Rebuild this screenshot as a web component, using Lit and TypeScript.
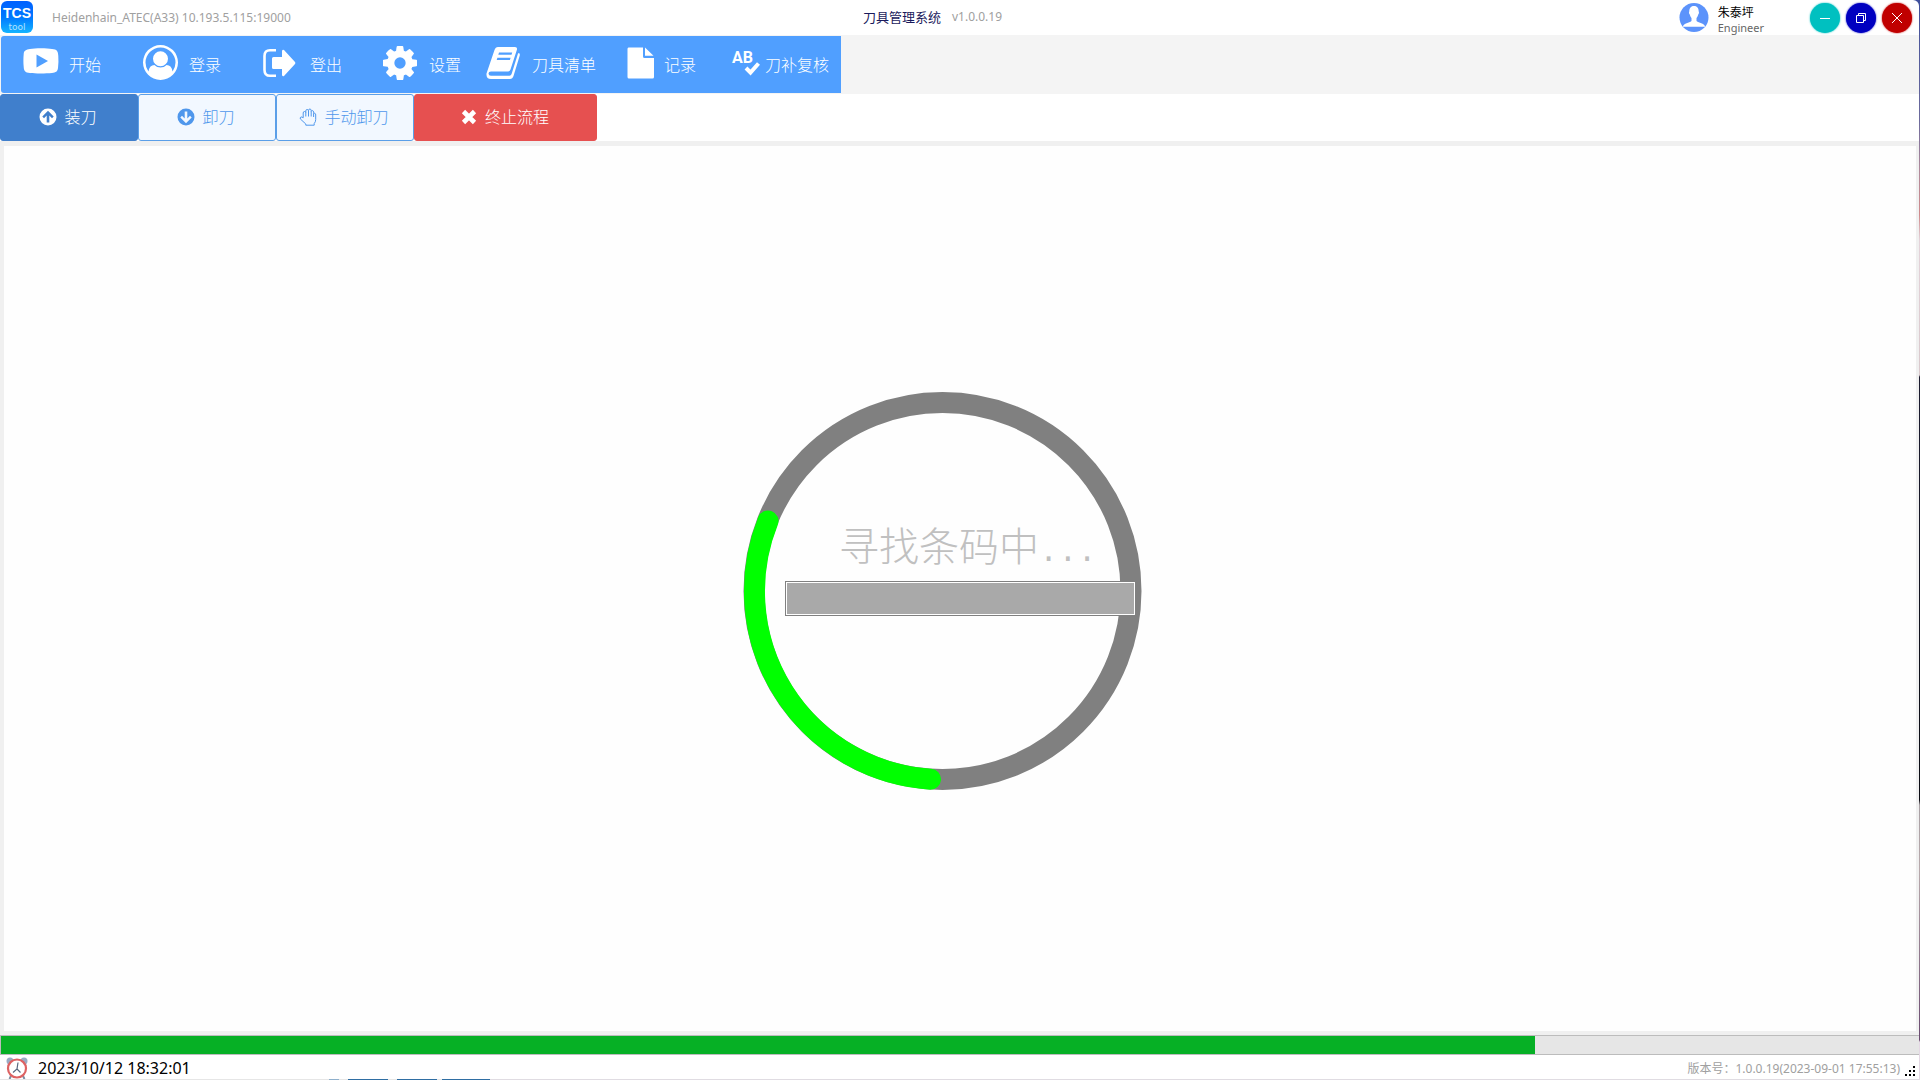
import { LitElement, html, css, svg, nothing } from "lit";
import { customElement, property } from "lit/decorators.js";

const icons: Record<string, { box: string; body: unknown }> = {
  start: {
    box: "0 0 36 26",
    body: svg`<path fill-rule="evenodd" d="M7 1C12 0 24 0 29 1C34 1.500 35 3 35.300 8C35.600 12 35.500 16 35 20C34.500 23.500 33 24.500 29 25C23 25.600 12 25.600 7 25C2 24.500 1 23 .7 19C.3 15 .3 10 .7 6C1 2.500 3 1.500 7 1ZM13.500 6.500V19.500L25 13Z"/>`,
  },
  user: {
    box: "0 0 1792 1792",
    body: svg`<path d="M896 0q182 0 348 71t286 191 191 286 71 348q0 181-70.500 347t-190.500 286-286 191.500-349 71.500-349-71-285.500-191.500-190.500-286-71-347.500 71-348 191-286 286-191 348-71zm619 1351q149-205 149-455 0-156-61-298t-164-245-245-164-298-61-298 61-245 164-164 245-61 298q0 250 149 455 66-327 306-327 131 128 313 128t313-128q240 0 306 327zm-235-647q0-159-112.500-271.500t-271.500-112.500-271.500 112.500-112.500 271.500 112.500 271.500 271.500 112.500 271.500-112.500 112.500-271.500z"/>`,
  },
  exit: {
    box: "0 0 34 28",
    body: svg`<path d="M13 1.200H7Q1.500 1.200 1.500 7V21Q1.500 26.800 7 26.800H13" fill="none" stroke="currentColor" stroke-width="2.600"/><path d="M9 9.500Q9 8 10.500 8H19V2Q19.500 0 21 1L32 13Q32.800 14 32 15L21 27Q19.500 28 19 26V20H10.500Q9 20 9 18.500Z"/>`,
  },
  gear: {
    box: "0 0 1536 1536",
    body: svg`<path d="M1024 768q0-106-75-181t-181-75-181 75-75 181 75 181 181 75 181-75 75-181zm512-109v222q0 12-8 23t-20 13l-185 28q-19 54-39 91 35 50 107 138 10 12 10 25t-9 23q-27 37-99 108t-94 71q-12 0-26-9l-138-108q-44 23-91 38-16 136-29 186-7 28-36 28H657q-14 0-24.500-8.500T621 1506l-28-184q-49-16-90-37l-141 107q-10 9-25 9-14 0-25-11-126-114-165-168-7-10-7-23 0-12 8-23 15-21 51-66.500t54-70.500q-27-50-41-99L29 913q-13-2-21-12.500T0 877V655q0-12 8-23t19-13l186-28q14-46 39-92-40-57-107-138-10-12-10-24 0-10 9-23 26-36 98.500-107.500T337 135q13 0 26 10l138 107q44-23 91-38 16-136 29-186 7-28 36-28h222q14 0 24.500 8.500T915 30l28 184q49 16 90 37l142-107q9-9 24-9 13 0 25 10 129 119 165 170 7 8 7 22 0 12-8 23-15 21-51 66.500t-54 70.500q26 50 41 98l183 28q13 2 21 12.500t8 23.500z"/>`,
  },
  book: {
    box: "0 0 34 34",
    body: svg`<path fill-rule="evenodd" d="M12 1H29Q31.500 1 31 3.500L24.500 23.500Q23.800 25.500 22 25.500H5Q2.500 25.500 2.500 27.500Q2.500 29.800 5 29.800H23.500Q25 29.800 25.600 28L32 7.500L33 7Q34.300 8 33.600 10L27.500 30Q26.500 33 24 33H5Q0 33 .5 27.500L8.500 4Q9.500 1 12 1ZM13 6.500L12.300 8.800H25.500L26.200 6.500ZM11.400 11.700L10.700 14H23.900L24.600 11.700Z"/>`,
  },
  file: {
    box: "0 0 28 32",
    body: svg`<path d="M1.500 .5H16V9.500Q16 11 17.500 11H27V30Q27 31.500 25.500 31.500H2Q.5 31.500 .5 30V2Q.5 .5 1.500 .5ZM18 .5L26.500 8.800H18Z"/>`,
  },
  check: {
    box: "-2 -5 32 36",
    body: svg`<text x="0" y="13" font-family="Roboto, sans-serif" font-size="16" font-weight="700">AB</text><path d="M14 18L18.500 22.500L26.500 13.500" fill="none" stroke="currentColor" stroke-width="4"/>`,
  },
  up: {
    box: "0 0 18 18",
    body: svg`<path fill-rule="evenodd" d="M9 .5A8.500 8.500 0 1 0 9 17.500A8.500 8.500 0 1 0 9 .5ZM9 2.800L14.700 8.500L13 10.200L10.300 7.500V14.500H7.700V7.500L5 10.200L3.300 8.500Z"/>`,
  },
  down: {
    box: "0 0 18 18",
    body: svg`<path fill-rule="evenodd" d="M9 .5A8.500 8.500 0 1 0 9 17.500A8.500 8.500 0 1 0 9 .5ZM9 15.200L14.700 9.500L13 7.800L10.300 10.500V3.500H7.700V10.500L5 7.800L3.300 9.500Z"/>`,
  },
  hand: {
    box: "0 0 18 18",
    body: svg`<path d="M4.200 9.800V5Q4.200 3.500 5.500 3.500T6.800 4.700V2.700Q6.800 1.600 8.100 1.600T9.500 2.400Q9.700 1 10.900 1T12.200 2.600V3.500Q12.400 2.400 13.500 2.600T14.600 4.200V5.600Q15.200 4.900 16 5.300T16.700 7V11.500Q16.700 14 15.200 15.500V17.200H6.800V16L1.400 11Q.8 9.700 1.800 9.100T4.200 9.800ZM6.800 4.700V8.500M9.500 2.400V8.500M12.200 3.500V8.500M14.600 5.600V9" fill="none" stroke="currentColor" stroke-linejoin="round"/>`,
  },
  cross: {
    box: "0 0 18 18",
    body: svg`<path d="M3.500 3.500L14.500 14.500M14.500 3.500L3.500 14.500" fill="none" stroke="currentColor" stroke-width="4.600"/>`,
  },
};

@customElement("tool-icon")
export class ToolIcon extends LitElement {
  @property() name = "";
  @property({ type: Number }) width = 18;
  @property({ type: Number }) height = 18;
  static styles = css`
    :host { display: block; flex: none; }
    svg { display: block; fill: currentColor; overflow: visible; }
  `;
  render() {
    const icon = icons[this.name];
    return icon
      ? html`<svg width=${this.width} height=${this.height} viewBox=${icon.box} aria-hidden="true">${icon.body}</svg>`
      : nothing;
  }
}

const menu = [
  { icon: "start", label: "开始", w: 36, h: 26, cls: "m-start" },
  { icon: "user", label: "登录", w: 35, h: 35, cls: "m-user" },
  { icon: "exit", label: "登出", w: 34, h: 28, cls: "m-exit" },
  { icon: "gear", label: "设置", w: 34, h: 34, cls: "m-gear" },
  { icon: "book", label: "刀具清单", w: 34, h: 34, cls: "m-book" },
  { icon: "file", label: "记录", w: 28, h: 32, cls: "m-file" },
  { icon: "check", label: "刀补复核", w: 32, h: 36, cls: "m-check" },
];

const actions = [
  { icon: "up", label: "装刀", cls: "active" },
  { icon: "down", label: "卸刀", cls: "" },
  { icon: "hand", label: "手动卸刀", cls: "" },
  { icon: "cross", label: "终止流程", cls: "stop" },
];

@customElement("app-root")
export class AppRoot extends LitElement {
  @property({ type: Number }) progress = 80;

  static styles = css`
    :host {
      display: block;
      height: 100vh;
      font-family: "Noto Sans", "Noto Sans CJK SC", sans-serif;
      background:
        linear-gradient(90deg, #e6e6e6 329px, #8fb0cc 329px 339px, #e6e6e6 339px 348px, #2f6ea3 348px 388px, #e6e6e6 388px 397px, #2f6ea3 397px 437px, #e6e6e6 437px 442px, #2f6ea3 442px 490px, #e0dce2 490px) bottom / 100% 1px no-repeat,
        linear-gradient(#3f4f9c 0, #6c6a9c 120px, #b08a9c 170px, #d08a8c 215px, #e4d3da 240px, #d9c8cc 375px, #1c1c30 377px, #0b0d14 800px, #a8a0a4 805px, #b8a9ac 870px, #6a4a70 1040px, #e4d8e4 1042px);
    }
    * { box-sizing: border-box; }
    button { font: inherit; margin: 0; padding: 0; border: 0; cursor: pointer; }
    .window {
      display: flex;
      flex-direction: column;
      height: calc(100% - 1px);
      margin-right: 1px;
      background: #fff;
      border-top-right-radius: 6px;
      overflow: hidden;
    }
    .titlebar { display: grid; grid-template-columns: 1fr auto 1fr; align-items: center; height: 35px; flex: none; font-size: 12px; }
    .left, .right, .title { display: flex; align-items: center; }
    .left { gap: 19px; color: #a0a0a0; }
    .logo { display: block; }
    .title { gap: 11px; color: #1a1a5c; font-size: 13px; margin-right: 54px; padding-bottom: 2px; }
    .version { color: #a0a0a0; font-size: 12px; }
    .right { justify-content: flex-end; padding-right: 7px; }
    .avatar { display: block; }
    .who { display: flex; flex-direction: column; margin-left: 9px; margin-right: 46px; line-height: 15px; color: #000; padding-top: 4px; }
    .role { font-size: 11px; color: #666; }
    .controls { display: flex; gap: 6px; }
    .ctl { width: 30px; height: 30px; border-radius: 50%; color: #fff; display: grid; place-items: center; }
    .ctl svg { display: block; }
    .min { background: #00c0c0; box-shadow: 0 0 2px #00c0c0; }
    .max { background: #0000c0; box-shadow: 0 0 2px #0000c0; }
    .close { background: #c00000; box-shadow: 0 0 2px #c00000; }
    .toolbar { flex: none; height: 59px; background: #f4f4f4; padding: 1px; }
    .menu { display: flex; height: 57px; width: 840px; background: #509fff; border-radius: 3px 0 0 3px; }
    .item { display: flex; align-items: center; width: 120px; background: none; color: #fff; font-size: 16px; line-height: 24px; font-weight: 300; }
    .item tool-icon { padding-bottom: 4px; }
    .m-start { padding-left: 22px; gap: 10px; }
    .m-start tool-icon { padding-bottom: 8px; }
    .m-user { padding-left: 22px; gap: 11px; }
    .m-exit { padding-left: 22px; gap: 13px; }
    .m-gear { padding-left: 22px; gap: 12px; width: 110px; }
    .m-book { padding-left: 15px; gap: 12px; width: 143px; }
    .m-file { padding-left: 13px; gap: 9px; width: 104px; }
    .m-check { padding-left: 12px; gap: 3px; width: 123px; }
    .actions { display: flex; flex: none; height: 47px; }
    .action { display: flex; align-items: center; justify-content: center; gap: 7px; width: 138px; border-radius: 3px; border: 1px solid #5b9fe8; background: #f2f8ff; color: #4f97ec; font-size: 16px; line-height: 24px; font-weight: 300; padding: 0 2px 2px 0; }
    .active { background: #407fcc; border-color: #407fcc; color: #fff; }
    .stop { width: 183px; background: #e65050; border-color: #e65050; color: #fff; }
    .frame { flex: 1; min-height: 0; background: #f0f0f0; padding: 5px 3px 4px 4px; display: flex; }
    .stage { flex: 1; background: #fefefe; display: grid; place-items: center; }
    .dial { position: relative; width: 400px; height: 400px; margin-right: 34px; }
    .dial svg { display: block; overflow: visible; }
    .message { position: absolute; left: 96px; top: 125px; margin: 0; color: #c0c0c0; font-size: 40px; line-height: 60px; font-weight: 300; white-space: nowrap; font-family: "Noto Sans CJK SC", sans-serif; }
    .dots { font-family: "Liberation Mono", monospace; font-size: 32px; font-weight: 400; }
    .code { position: absolute; left: 42px; top: 192px; width: 351px; height: 35px; background: #a9a9a9; border: 1px solid #808080; outline: 1px solid #fff; outline-offset: -2px; padding: 0 6px; border-radius: 0; font-size: 20px; }
    .progress { flex: none; height: 20px; background: #e6e6e6; border: 1px solid #bcbcbc; border-right: 0; }
    .bar { height: 100%; background: #06b025; }
    .status { flex: none; height: 24px; display: flex; align-items: center; padding: 2px 3px 0 6px; }
    .clock { display: block; }
    .time { font-size: 16px; line-height: 24px; margin-left: 10px; color: #000; }
    .build { margin-left: auto; font-size: 12px; color: #a0a0a0; }
    .grip { align-self: end; display: block; margin-left: 4px; }
  `;

  render() {
    return html`
      <div class="window">
        <header class="titlebar">
          <div class="left">
            <svg class="logo" width="33" height="33" viewBox="0 0 33 33" role="img" aria-label="TCS tool">
              <defs><linearGradient id="lg" x1="0" y1="0" x2="0" y2="1"><stop offset="0" stop-color="#0060ff" /><stop offset=".5" stop-color="#0078ff" /><stop offset="1" stop-color="#14b4ff" /></linearGradient></defs>
              <rect x="1" y="0" width="32" height="32" rx="6" fill="url(#lg)" />
              <text x="17" y="17" text-anchor="middle" fill="#fff" font-family="Liberation Sans, sans-serif" font-weight="700" font-size="14">TCS</text>
              <text x="17" y="29" text-anchor="middle" fill="#b4e0ff" font-family="DejaVu Sans, sans-serif" font-size="9">tool</text>
            </svg>
            <span>Heidenhain_ATEC(A33) 10.193.5.115:19000</span>
          </div>
          <div class="title"><span>刀具管理系统</span><span class="version">v1.0.0.19</span></div>
          <div class="right">
            <svg class="avatar" width="30" height="30" viewBox="0 0 30 30" aria-hidden="true">
              <circle cx="15" cy="14.500" r="14.500" fill="#5c93fb" />
              <path d="M15 3C18.500 3 19.800 5.500 19.700 8.500C20.300 9 19.900 11 19.200 11.500C18.800 13.500 18 14.300 17.500 15V18C20 20 25 20 26.300 23.700H3.700C5 20 10 20 12.500 18V15C12 14.300 11.200 13.500 10.800 11.500C10.100 11 9.700 9 10.300 8.500C10.200 5.500 11.500 3 15 3Z" fill="#fff" />
            </svg>
            <div class="who"><span>朱泰坪</span><span class="role">Engineer</span></div>
            <div class="controls">
              <button class="ctl min" aria-label="最小化"><svg width="12" height="12"><path d="M1 6.500H11" stroke="currentColor" /></svg></button>
              <button class="ctl max" aria-label="还原"><svg width="12" height="12" fill="none" stroke="currentColor"><path d="M1.500 3.500H8.500V10.500H1.500ZM3.500 3.500V1.500H10.500V8.500H8.500" /></svg></button>
              <button class="ctl close" aria-label="关闭"><svg width="12" height="12"><path d="M1 1L11 11M11 1L1 11" stroke="currentColor" /></svg></button>
            </div>
          </div>
        </header>
        <div class="toolbar">
          <nav class="menu">
            ${menu.map((m) => html`<button class="item ${m.cls}"><tool-icon name=${m.icon} width=${m.w} height=${m.h}></tool-icon><span>${m.label}</span></button>`)}
          </nav>
        </div>
        <div class="actions">
          ${actions.map((a) => html`<button class="action ${a.cls}"><tool-icon name=${a.icon}></tool-icon><span>${a.label}</span></button>`)}
        </div>
        <main class="frame">
          <section class="stage">
            <div class="dial">
              <svg width="400" height="400" viewBox="0 0 400 400" fill="none" stroke-width="21" aria-hidden="true">
                <circle cx="199.500" cy="202" r="188.500" stroke="#808080" />
                <path d="M25 132A188.500 188.500 0 0 0 187.500 390.200" stroke="#00ff00" stroke-linecap="round" />
              </svg>
              <p class="message" id="msg">寻找条码中<span class="dots">...</span></p>
              <input class="code" aria-labelledby="msg" />
            </div>
          </section>
        </main>
        <div class="progress" role="progressbar" aria-valuenow=${this.progress}><div class="bar" style="width:${this.progress}%"></div></div>
        <footer class="status">
          <svg class="clock" width="22" height="22" viewBox="0 0 22 22" aria-hidden="true">
            <circle cx="4" cy="4" r="3.500" fill="#9aabc4" /><circle cx="18" cy="4" r="3.500" fill="#9aabc4" />
            <path d="M5 19L3.500 22M17 19L18.500 22" stroke="#7d8ba0" stroke-width="2" />
            <circle cx="11" cy="11.500" r="9" fill="#fff" stroke="#dd6262" stroke-width="2.200" />
            <path d="M12 5.500L11 12L7 15.500M11 12L14.500 15.500" fill="none" stroke="#56677e" stroke-width="1.200" />
          </svg>
          <time class="time">2023/10/12 18:32:01</time>
          <span class="build">版本号：1.0.0.19(2023-09-01 17:55:13)</span>
          <svg class="grip" width="12" height="14" viewBox="0 0 12 14" fill="#000" aria-hidden="true"><path d="M9 1h2v2H9zM9 5h2v2H9zM5 5h2v2H5zM9 9h2v2H9zM5 9h2v2H5zM1 9h2v2H1z" /></svg>
        </footer>
      </div>
    `;
  }
}
